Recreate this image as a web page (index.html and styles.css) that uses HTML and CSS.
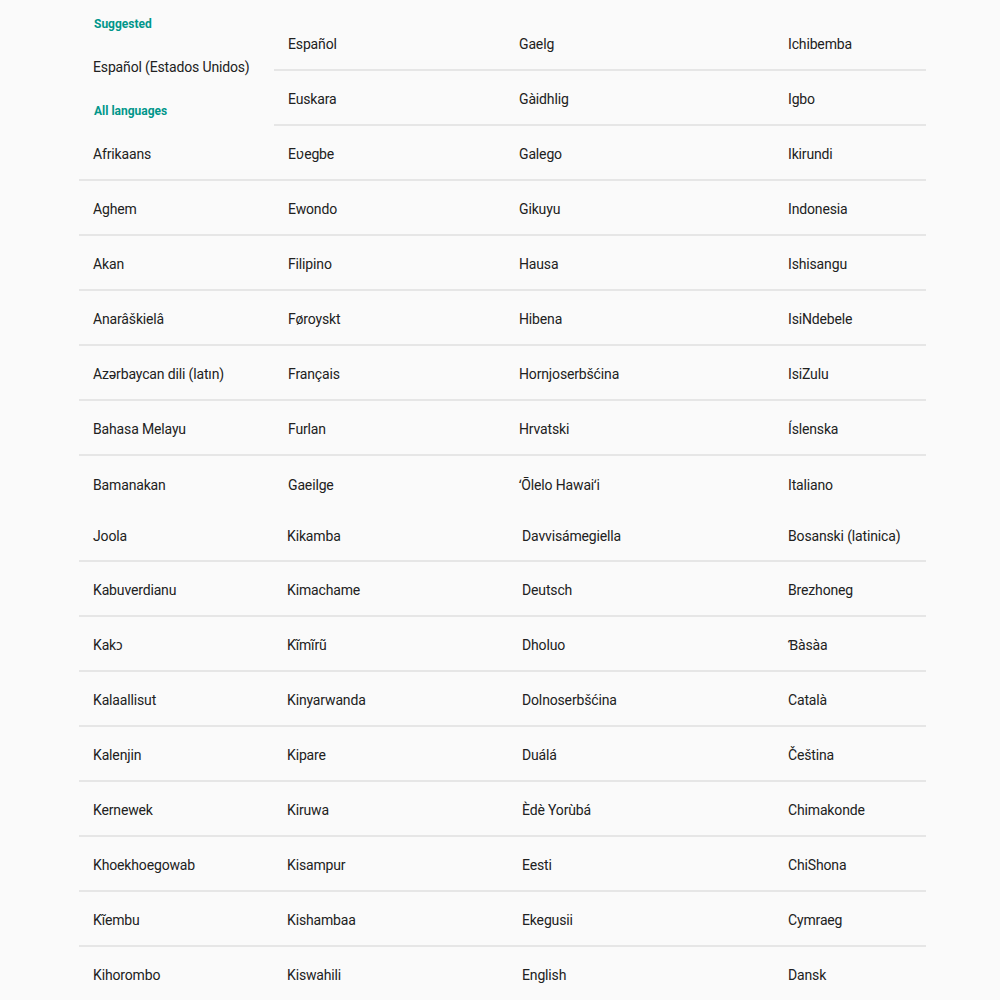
FILE: index.html
```html
<!DOCTYPE html>
<html>
<head>
<meta charset="utf-8">
<link rel="stylesheet" href="styles.css">
</head>
<body>
<div class="page">
  <section class="block block-top">
    <div class="col c1">
      <div class="header">
        <div class="label label-suggested">Suggested</div>
        <div class="suggested-item">Español (Estados Unidos)</div>
        <div class="label label-all">All languages</div>
      </div>
      <div class="row">Afrikaans</div>
      <div class="row">Aghem</div>
      <div class="row">Akan</div>
      <div class="row">Anarâškielâ</div>
      <div class="row">Azərbaycan dili (latın)</div>
      <div class="row">Bahasa Melayu</div>
      <div class="row last">Bamanakan</div>
    </div>
    <div class="col c2 padded">
      <div class="row">Español</div>
      <div class="row">Euskara</div>
      <div class="row">Eʋegbe</div>
      <div class="row">Ewondo</div>
      <div class="row">Filipino</div>
      <div class="row">Føroyskt</div>
      <div class="row">Français</div>
      <div class="row">Furlan</div>
      <div class="row last">Gaeilge</div>
    </div>
    <div class="col c3 padded">
      <div class="row">Gaelg</div>
      <div class="row">Gàidhlig</div>
      <div class="row">Galego</div>
      <div class="row">Gikuyu</div>
      <div class="row">Hausa</div>
      <div class="row">Hibena</div>
      <div class="row">Hornjoserbšćina</div>
      <div class="row">Hrvatski</div>
      <div class="row last">ʻŌlelo Hawaiʻi</div>
    </div>
    <div class="col c4 padded">
      <div class="row">Ichibemba</div>
      <div class="row">Igbo</div>
      <div class="row">Ikirundi</div>
      <div class="row">Indonesia</div>
      <div class="row">Ishisangu</div>
      <div class="row">IsiNdebele</div>
      <div class="row">IsiZulu</div>
      <div class="row">Íslenska</div>
      <div class="row last">Italiano</div>
    </div>
  </section>
  <section class="block block-bottom">
    <div class="col c1">
      <div class="row first">Joola</div>
      <div class="row">Kabuverdianu</div>
      <div class="row">Kakɔ</div>
      <div class="row">Kalaallisut</div>
      <div class="row">Kalenjin</div>
      <div class="row">Kernewek</div>
      <div class="row">Khoekhoegowab</div>
      <div class="row">Kĩembu</div>
      <div class="row">Kihorombo</div>
    </div>
    <div class="col c2">
      <div class="row first">Kikamba</div>
      <div class="row">Kimachame</div>
      <div class="row">Kĩmĩrũ</div>
      <div class="row">Kinyarwanda</div>
      <div class="row">Kipare</div>
      <div class="row">Kiruwa</div>
      <div class="row">Kisampur</div>
      <div class="row">Kishambaa</div>
      <div class="row">Kiswahili</div>
    </div>
    <div class="col c3">
      <div class="row first">Davvisámegiella</div>
      <div class="row">Deutsch</div>
      <div class="row">Dholuo</div>
      <div class="row">Dolnoserbšćina</div>
      <div class="row">Duálá</div>
      <div class="row">Èdè Yorùbá</div>
      <div class="row">Eesti</div>
      <div class="row">Ekegusii</div>
      <div class="row">English</div>
    </div>
    <div class="col c4">
      <div class="row first">Bosanski (latinica)</div>
      <div class="row">Brezhoneg</div>
      <div class="row">Ɓàsàa</div>
      <div class="row">Català</div>
      <div class="row">Čeština</div>
      <div class="row">Chimakonde</div>
      <div class="row">ChiShona</div>
      <div class="row">Cymraeg</div>
      <div class="row">Dansk</div>
    </div>
  </section>
</div>
</body>
</html>
```

FILE: styles.css
```css
html, body {
  margin: 0;
  padding: 0;
  background: #fafafa;
}
body {
  height: 1000px;
  overflow: hidden;
  font-family: Roboto, "Noto Sans", "Liberation Sans", sans-serif;
  font-size: 14px;
  letter-spacing: -0.15px;
  color: #212121;
}
.page {
  padding-left: 79px;
  padding-top: 1px;
  width: 847px;
}
.block {
  display: grid;
}
.block-top {
  grid-template-columns: 195px 231px 269px 152px;
}
.block-bottom {
  grid-template-columns: 194px 235px 266px 152px;
}
.col {
  display: flex;
  flex-direction: column;
}
.padded {
  padding-top: 15px;
}
.row {
  box-sizing: border-box;
  height: 55px;
  padding: 2px 14px 0;
  display: flex;
  align-items: center;
  border-bottom: 2px solid #e6e6e6;
  white-space: nowrap;
}
.row.last {
  border-bottom: none;
}
.row.first {
  height: 51px;
  padding-top: 0;
}
.header {
  height: 125px;
  display: flex;
  flex-direction: column;
  padding-left: 15px;
  box-sizing: border-box;
}
.label {
  color: #00968a;
  font-weight: bold;
  font-size: 12px;
  letter-spacing: 0;
}
.label-suggested {
  margin-top: 16px;
  line-height: 14px;
}
.suggested-item {
  margin-left: -1px;
  margin-top: 28px;
  line-height: 16px;
}
.label-all {
  margin-top: 29px;
  line-height: 14px;
}
```
